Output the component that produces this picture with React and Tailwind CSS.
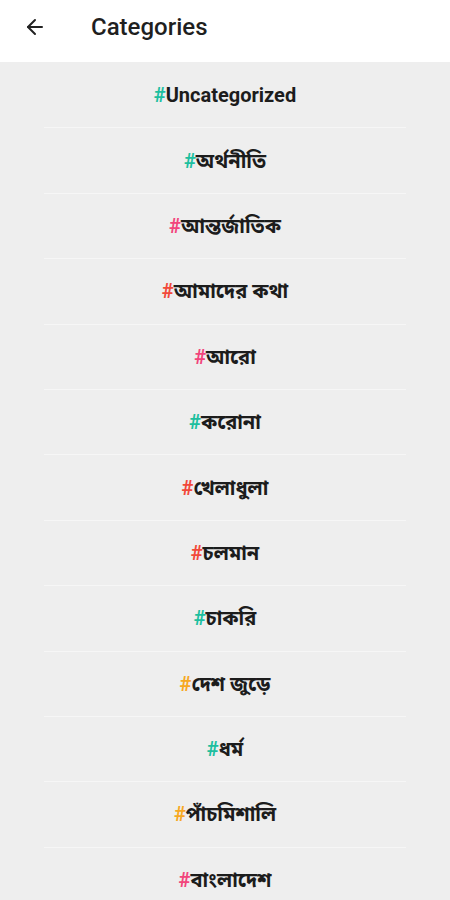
import { ArrowLeft } from "lucide-react";

const categories = [
  { name: "Uncategorized", tone: "text-[#1dbf9f]" },
  { name: "অর্থনীতি", tone: "text-[#1dbf9f]" },
  { name: "আন্তর্জাতিক", tone: "text-[#f2457c]" },
  { name: "আমাদের কথা", tone: "text-[#f2493a]" },
  { name: "আরো", tone: "text-[#f2457c]" },
  { name: "করোনা", tone: "text-[#1dbf9f]" },
  { name: "খেলাধুলা", tone: "text-[#f2493a]" },
  { name: "চলমান", tone: "text-[#f2493a]" },
  { name: "চাকরি", tone: "text-[#1dbf9f]" },
  { name: "দেশ জুড়ে", tone: "text-[#f7a823]" },
  { name: "ধর্ম", tone: "text-[#1dbf9f]" },
  { name: "পাঁচমিশালি", tone: "text-[#f7a823]" },
  { name: "বাংলাদেশ", tone: "text-[#f2457c]" },
];

export default function App() {
  return (
    <div className="flex h-[900px] w-[450px] flex-col overflow-hidden bg-[#eeeeee] font-['Roboto','Noto_Sans','Noto_Sans_Bengali',sans-serif]">
      <header className="flex h-[62px] shrink-0 items-center bg-white pb-2">
        <button type="button" className="ml-[23px] flex h-6 w-6 items-center justify-center text-[#222222]">
          <ArrowLeft size={24} strokeWidth={2} />
        </button>
        <h1 className="ml-[44px] text-[24px] font-medium text-[#1f1f1f]">Categories</h1>
      </header>

      <ul className="flex flex-col pt-[1px]">
        {categories.map((category) => (
          <li key={category.name} className="flex flex-col">
            <div className="flex h-[64.4px] items-center justify-center text-[20px] font-bold text-[#1c1c1c]">
              <span className={category.tone}>#</span>
              <span>{category.name}</span>
            </div>
            <div className="mx-[44px] h-px bg-[#f6f6f6]" />
          </li>
        ))}
      </ul>
    </div>
  );
}
